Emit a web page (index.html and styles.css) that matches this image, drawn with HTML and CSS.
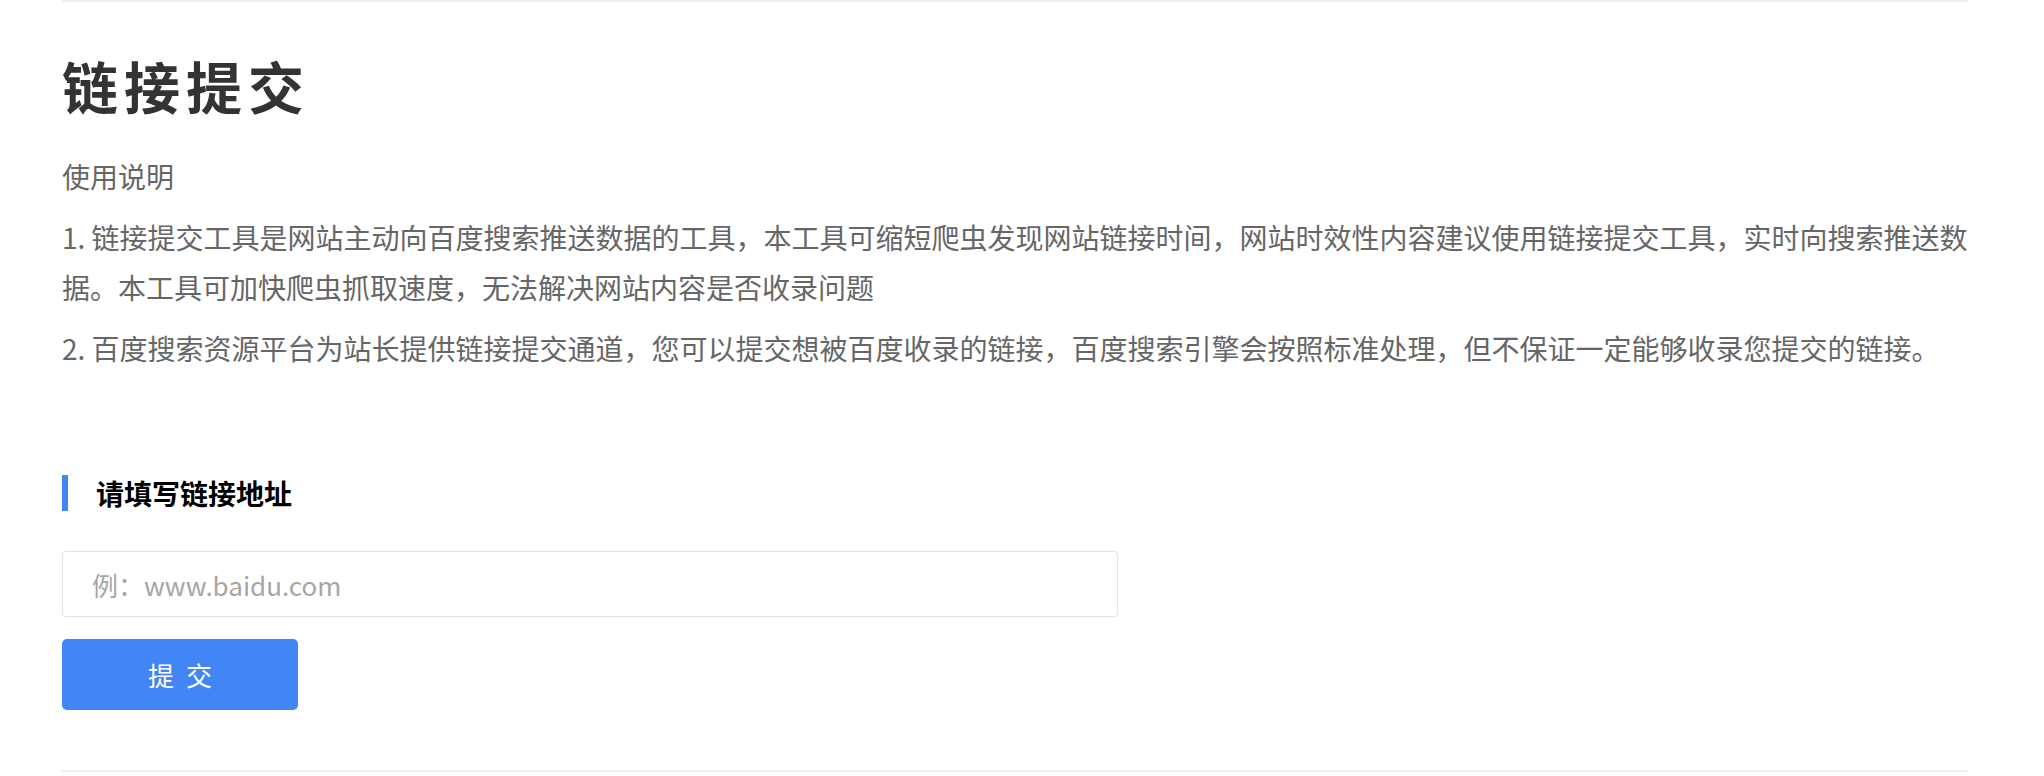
FILE: index.html
```html
<!DOCTYPE html>
<html>
<head>
    <title>链接提交</title>
    <meta charset="utf-8">
    <meta name="viewport" content="width=device-width, initial-scale=1.0">
    <link rel="stylesheet" href="styles.css">
</head>
<body>
    <div class="submit-container">
        <h1 class="page-title">链接提交</h1>
        <div class="usage">
            <p>使用说明</p>
            <p>1. 链接提交工具是网站主动向百度搜索推送数据的工具，本工具可缩短爬虫发现网站链接时间，网站时效性内容建议使用链接提交工具，实时向搜索推送数据。本工具可加快爬虫抓取速度，无法解决网站内容是否收录问题</p>
            <p>2. 百度搜索资源平台为站长提供链接提交通道，您可以提交想被百度收录的链接，百度搜索引擎会按照标准处理，但不保证一定能够收录您提交的链接。</p>
        </div>
        <form id="submitForm" class="submit-form">
            <h3 class="section-title">请填写链接地址</h3>
            <input type="text" id="url" name="url" class="url-input" placeholder="例：www.baidu.com">
            <button type="submit" class="submit-btn">提交</button>
        </form>
    </div>
</body>
</html>
```

FILE: styles.css
```css
body {
    margin: 0;
    padding: 0;
    background: white;
    font-family: "Noto Sans CJK SC", "Noto Sans", sans-serif;
}

.submit-container {
    margin-left: 62px;
    width: 1906px;
    padding-top: 48px;
    padding-bottom: 60px;
    border-top: 2px solid #f2f2f2;
    border-bottom: 2px solid #eeeeee;
}

.page-title {
    margin: 0 0 31px;
    font-size: 56px;
    line-height: 70px;
    font-weight: bold;
    letter-spacing: 6px;
    color: #333333;
}

.usage p {
    margin: 0 0 11px;
    font-size: 28px;
    line-height: 50px;
    color: #666666;
}

.submit-form {
    margin-top: 102px;
}

.section-title {
    margin: 0 0 40px;
    padding-left: 28px;
    border-left: 6px solid #4285f4;
    font-size: 28px;
    line-height: 36px;
    font-weight: bold;
    color: #000000;
}

.url-input {
    display: block;
    box-sizing: border-box;
    width: 1056px;
    height: 66px;
    padding: 0 29px;
    border: 1px solid #e3e3e3;
    border-radius: 4px;
    box-shadow: 0 0 2px rgba(0, 0, 0, 0.06);
    font-family: inherit;
    font-size: 26px;
    color: #333333;
    outline: none;
}

.url-input::placeholder {
    color: #a6a6a6;
}

.submit-btn {
    display: block;
    margin-top: 22px;
    width: 236px;
    height: 71px;
    padding: 0;
    border: none;
    border-radius: 5px;
    background-color: #4285f4;
    color: white;
    font-family: inherit;
    font-size: 26px;
    letter-spacing: 12px;
    text-indent: 12px;
    cursor: pointer;
}

.submit-btn:hover {
    background-color: #3b78e0;
}
```
